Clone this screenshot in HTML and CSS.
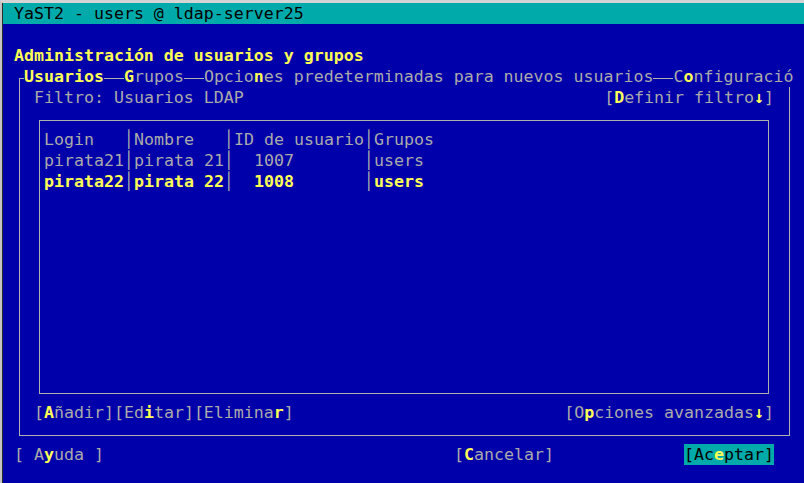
FILE: index.html
```html
<!DOCTYPE html>
<html lang="es">
<head>
<meta charset="utf-8">
<title>YaST2 - users @ ldap-server25</title>
<link rel="stylesheet" href="styles.css">
</head>
<body>
<div class="window">
  <div class="screen">
    <div class="titlebar">YaST2 - users @ ldap-server25</div>
    <h1 class="heading">Administración de usuarios y grupos</h1>
    <div class="frame">
      <div class="tabs">
        <span class="tab tab-active">Usuarios</span>
        <span class="tab"><b class="hk">G</b>rupos</span>
        <span class="tab">Opcio<b class="hk">n</b>es predeterminadas para nuevos usuarios</span>
        <span class="tab">C<b class="hk">o</b>nfiguració</span>
      </div>
      <div class="filter-row">
        <span>Filtro: Usuarios LDAP</span>
        <span>[<b class="hk">D</b>efinir filtro<b class="hk">↓</b>]</span>
      </div>
      <div class="table-box">
        <div class="trow">
          <span>Login</span><span class="sep">│</span><span>Nombre</span><span class="sep">│</span><span>ID de usuario</span><span class="sep">│</span><span>Grupos</span>
        </div>
        <div class="trow">
          <span>pirata21</span><span class="sep">│</span><span>pirata 21</span><span class="sep">│</span><span>  1007</span><span class="sep">│</span><span>users</span>
        </div>
        <div class="trow trow-selected">
          <span>pirata22</span><span class="sep">│</span><span>pirata 22</span><span class="sep">│</span><span>  1008</span><span class="sep">│</span><span>users</span>
        </div>
      </div>
      <div class="actions">
        <span>[<b class="hk">A</b>ñadir][Ed<b class="hk">i</b>tar][Elimina<b class="hk">r</b>]</span>
        <span>[O<b class="hk">p</b>ciones avanzadas<b class="hk">↓</b>]</span>
      </div>
    </div>
    <div class="footer">
      <span>[ A<b class="hk">y</b>uda ]</span>
      <span>[<b class="hk">C</b>ancelar]</span>
      <span class="btn-focus">[Ac<b class="hk">e</b>ptar]</span>
    </div>
  </div>
</div>
</body>
</html>
```

FILE: styles.css
```css
html, body {
  margin: 0;
  padding: 0;
}

body {
  width: 804px;
  height: 483px;
  overflow: hidden;
  background: #0000aa;
  font-family: "DejaVu Sans Mono", "Liberation Mono", monospace;
  font-size: 16.6px;
  line-height: 21px;
  color: #aaaaaa;
}

.window {
  box-sizing: border-box;
  height: 483px;
  border-top: 3px solid #d4d4d4;
  border-left: 2px solid #c4c4c4;
}

.screen {
  height: 100%;
  border-left: 1px solid #2c2c2c;
}

.titlebar {
  height: 21px;
  background: #00aaaa;
  color: #000000;
  padding-left: 11px;
  white-space: pre;
}

.heading {
  margin: 21px 0 0 0;
  padding-left: 11px;
  height: 21px;
  font-size: inherit;
  line-height: 21px;
  font-weight: bold;
  color: #ffff55;
  white-space: pre;
}

.hk {
  font-weight: bold;
  color: #ffff55;
}

.frame {
  box-sizing: border-box;
  margin: 12px 0 0 16px;
  width: 771px;
  border: 1px solid #b0b0b0;
  padding-bottom: 12px;
}

.tabs {
  display: flex;
  gap: 20px;
  margin-top: -13px;
  padding-left: 4px;
  height: 21px;
  white-space: pre;
}

.tab {
  flex-shrink: 0;
  background: #0000aa;
}

.tab-active {
  font-weight: bold;
  color: #ffff55;
}

.filter-row {
  display: flex;
  justify-content: space-between;
  height: 21px;
  padding: 0 15px 0 14px;
  white-space: pre;
}

.table-box {
  box-sizing: border-box;
  margin: 12px 20px 0 19px;
  height: 274px;
  border: 1px solid #b0b0b0;
  padding: 8px 0 0 4px;
}

.trow {
  display: grid;
  grid-template-columns: 80px 10px 90px 10px 130px 10px 1fr;
  height: 21px;
  white-space: pre;
}

.trow-selected {
  font-weight: bold;
  color: #ffff55;
}

.sep {
  color: #aaaaaa;
  font-weight: normal;
}

.actions {
  display: flex;
  justify-content: space-between;
  margin-top: 8px;
  height: 21px;
  padding: 0 15px 0 14px;
  white-space: pre;
}

.footer {
  display: grid;
  grid-template-columns: 440px 230px auto;
  margin-top: 8px;
  padding-left: 11px;
  height: 21px;
  white-space: pre;
}

.btn-focus {
  justify-self: start;
  background: #00aaaa;
  color: #000000;
}
```
